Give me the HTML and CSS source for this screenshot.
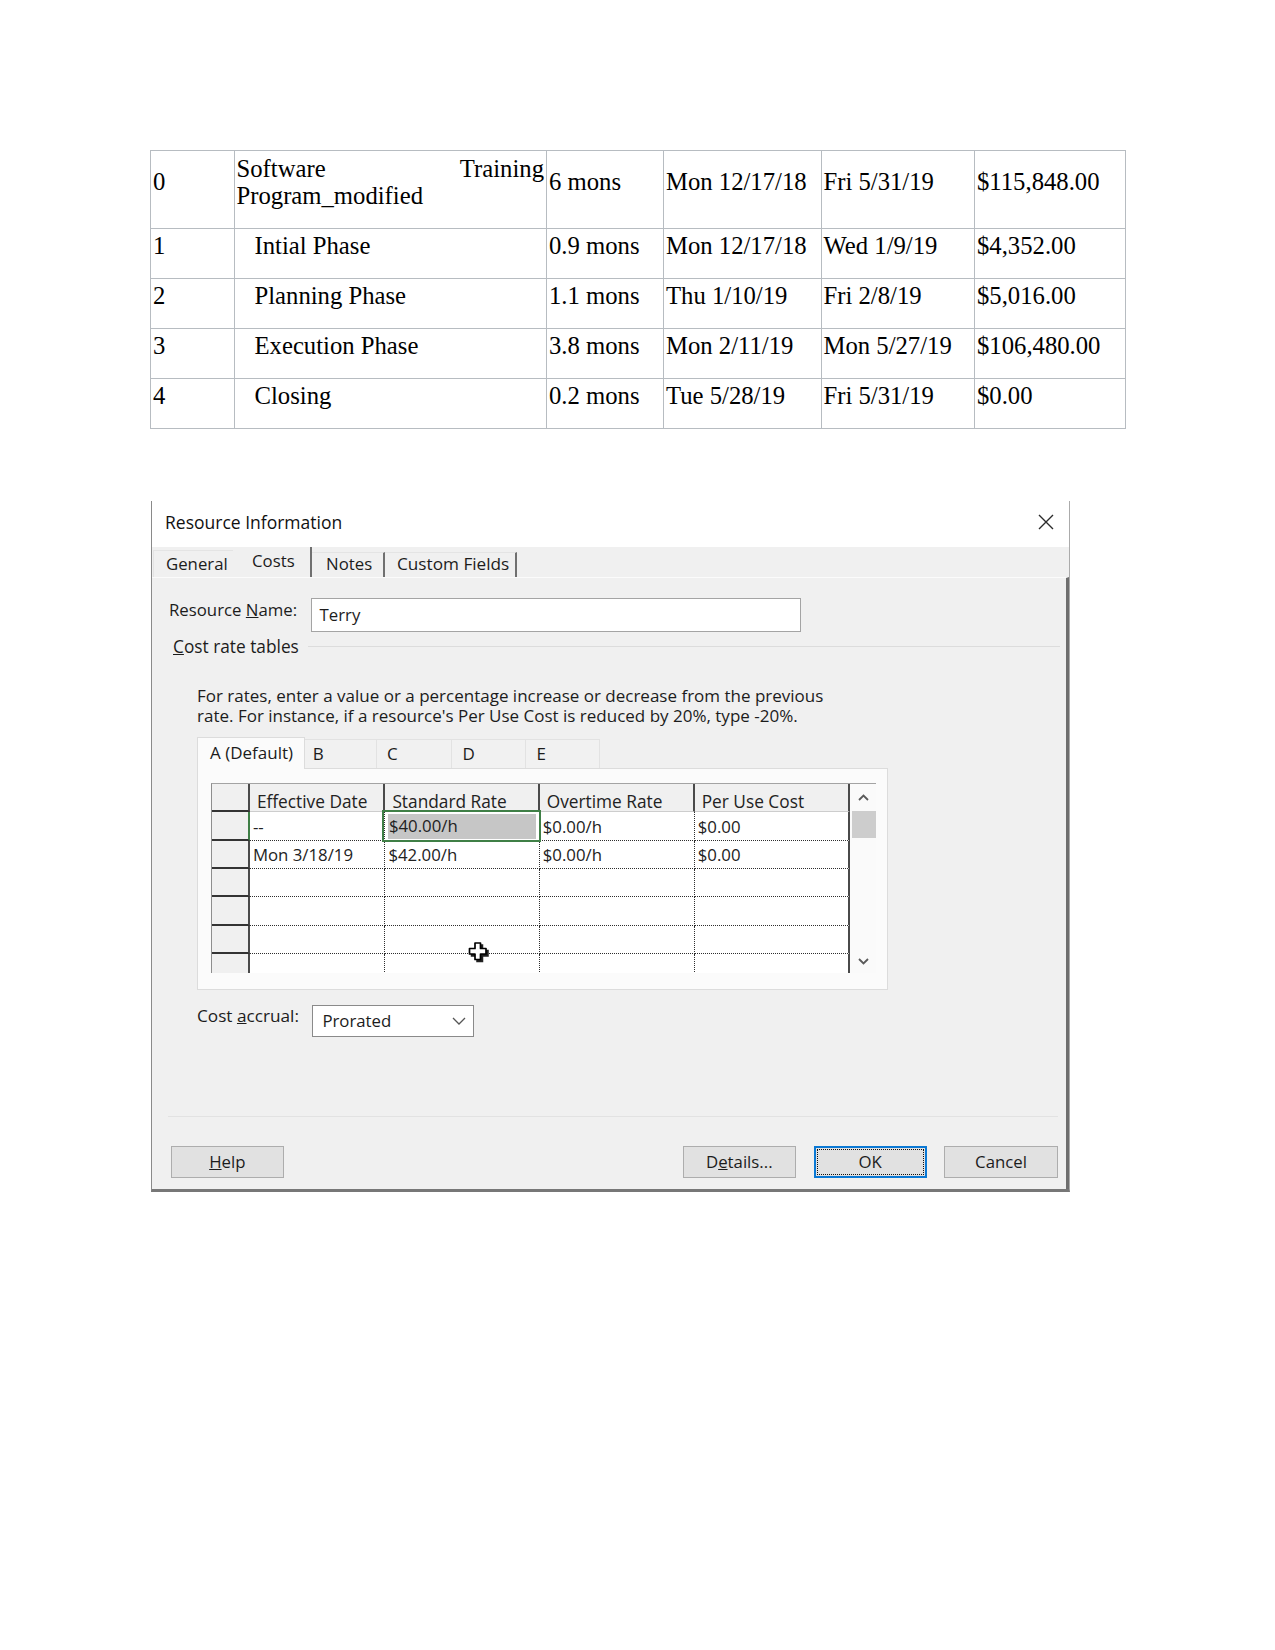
FILE: index.html
```html
<!DOCTYPE html>
<html lang="en">
<head>
<meta charset="utf-8">
<title>Resource Information</title>
<link rel="stylesheet" href="styles.css">
</head>
<body>
<div class="page">
  <table class="tasks">
    <colgroup>
      <col class="c-id"><col class="c-name"><col class="c-dur"><col class="c-start"><col class="c-finish"><col class="c-cost">
    </colgroup>
    <tr>
      <td>0</td>
      <td class="just">Software Training Program_modified</td>
      <td>6 mons</td>
      <td>Mon 12/17/18</td>
      <td>Fri 5/31/19</td>
      <td>$115,848.00</td>
    </tr>
    <tr>
      <td>1</td>
      <td class="indent">Intial Phase</td>
      <td>0.9 mons</td>
      <td>Mon 12/17/18</td>
      <td>Wed 1/9/19</td>
      <td>$4,352.00</td>
    </tr>
    <tr>
      <td>2</td>
      <td class="indent">Planning Phase</td>
      <td>1.1 mons</td>
      <td>Thu 1/10/19</td>
      <td>Fri 2/8/19</td>
      <td>$5,016.00</td>
    </tr>
    <tr>
      <td>3</td>
      <td class="indent">Execution Phase</td>
      <td>3.8 mons</td>
      <td>Mon 2/11/19</td>
      <td>Mon 5/27/19</td>
      <td>$106,480.00</td>
    </tr>
    <tr>
      <td>4</td>
      <td class="indent">Closing</td>
      <td>0.2 mons</td>
      <td>Tue 5/28/19</td>
      <td>Fri 5/31/19</td>
      <td>$0.00</td>
    </tr>
  </table>

  <div class="dialog">
    <div class="titlebar">
      <span class="title">Resource Information</span>
      <svg class="close" width="16" height="16" viewBox="0 0 16 16"><path d="M1 1 L15 15 M15 1 L1 15" stroke="#2b2b2b" stroke-width="1.4" fill="none"/></svg>
    </div>
    <div class="tabstrip">
      <div class="tab tab-general">General</div>
      <div class="tab tab-costs">Costs</div>
      <div class="tab tab-notes">Notes</div>
      <div class="tab tab-custom">Custom Fields</div>
    </div>
    <div class="panel">
      <div class="name-row">
        <span class="name-label">Resource <u>N</u>ame:</span>
        <div class="field">Terry</div>
      </div>
      <div class="legend">
        <span><u>C</u>ost rate tables</span>
        <span class="legend-line"></span>
      </div>
      <p class="desc">For rates, enter a value or a percentage increase or decrease from the previous<br>rate. For instance, if a resource's Per Use Cost is reduced by 20%, type -20%.</p>
      <div class="rtabs">
        <div class="rtab rtab-a">A (Default)</div>
        <div class="rtab rtab-b">B</div>
        <div class="rtab rtab-c">C</div>
        <div class="rtab rtab-d">D</div>
        <div class="rtab rtab-e">E</div>
      </div>
      <div class="rpanel">
        <div class="grid">
          <div class="gtable">
            <div class="grow ghead">
              <div class="cell rh"></div>
              <div class="cell c1">Effective Date</div>
              <div class="cell c2">Standard Rate</div>
              <div class="cell c3">Overtime Rate</div>
              <div class="cell c4">Per Use Cost</div>
            </div>
            <div class="grow">
              <div class="cell rh active"></div>
              <div class="cell c1">--</div>
              <div class="cell c2 sel"><span class="hl">$40.00/h</span></div>
              <div class="cell c3">$0.00/h</div>
              <div class="cell c4">$0.00</div>
            </div>
            <div class="grow">
              <div class="cell rh"></div>
              <div class="cell c1">Mon 3/18/19</div>
              <div class="cell c2">$42.00/h</div>
              <div class="cell c3">$0.00/h</div>
              <div class="cell c4">$0.00</div>
            </div>
            <div class="grow">
              <div class="cell rh"></div><div class="cell c1"></div><div class="cell c2"></div><div class="cell c3"></div><div class="cell c4"></div>
            </div>
            <div class="grow">
              <div class="cell rh"></div><div class="cell c1"></div><div class="cell c2"></div><div class="cell c3"></div><div class="cell c4"></div>
            </div>
            <div class="grow">
              <div class="cell rh"></div><div class="cell c1"></div><div class="cell c2"></div><div class="cell c3"></div><div class="cell c4"></div>
            </div>
            <div class="grow">
              <div class="cell rh"></div><div class="cell c1"></div><div class="cell c2"></div><div class="cell c3"></div><div class="cell c4"></div>
            </div>
          </div>
          <div class="sb">
            <div class="sb-btn"><svg width="11" height="7" viewBox="0 0 11 7"><polyline points="1,6 5.5,1.5 10,6" fill="none" stroke="#5a5a5a" stroke-width="1.8"/></svg></div>
            <div class="sb-thumb"></div>
            <div class="sb-track"></div>
            <div class="sb-btn sb-down"><svg width="11" height="7" viewBox="0 0 11 7"><polyline points="1,1 5.5,5.5 10,1" fill="none" stroke="#5a5a5a" stroke-width="1.8"/></svg></div>
          </div>
          <svg class="cursor" width="24" height="23" viewBox="0 0 24 23">
            <path d="M8 2 H13.5 V7.5 H19 V13 H13.5 V18.5 H8 V13 H2.5 V7.5 H8 Z" transform="translate(2,2)" fill="#222" stroke="#222" stroke-width="1.5"/>
            <path d="M8 2 H13.5 V7.5 H19 V13 H13.5 V18.5 H8 V13 H2.5 V7.5 H8 Z" fill="#fff" stroke="#000" stroke-width="1.7" stroke-linejoin="round"/>
          </svg>
        </div>
      </div>
      <div class="accrual">
        <span class="accrual-label">Cost <u>a</u>ccrual:</span>
        <div class="select">
          <span>Prorated</span>
          <svg width="14" height="8" viewBox="0 0 14 8"><polyline points="1,1 7,7 13,1" fill="none" stroke="#555" stroke-width="1.3"/></svg>
        </div>
      </div>
      <div class="sep"></div>
      <div class="btnrow">
        <div class="btn"><span><u>H</u>elp</span></div>
        <div class="btn-spacer"></div>
        <div class="btn"><span>D<u>e</u>tails...</span></div>
        <div class="btn btn-ok"><span>OK</span></div>
        <div class="btn"><span>Cancel</span></div>
      </div>
    </div>
  </div>
</div>
</body>
</html>
```
FILE: styles.css
```css
html, body {
  margin: 0;
  padding: 0;
  background: #ffffff;
}

.page {
  padding: 150px 0 0 150px;
}

/* ---------- task table ---------- */
.tasks {
  border-collapse: collapse;
  table-layout: fixed;
  width: 975px;
  font-family: "Liberation Serif", "Times New Roman", serif;
  font-size: 24.7px;
  line-height: 27.5px;
  color: #000;
}
.c-id { width: 83.5px; }
.c-name { width: 312.5px; }
.c-dur { width: 117px; }
.c-start { width: 157.5px; }
.c-finish { width: 153.5px; }
.c-cost { width: 150.5px; }

.tasks td {
  border: 1px solid #b7bcc1;
  padding: 3.5px 2px 18px 2px;
  vertical-align: middle;
  white-space: nowrap;
}
.tasks td.just {
  white-space: normal;
  text-align: justify;
}
.tasks td.indent {
  padding-left: 20px;
}

/* ---------- dialog ---------- */
.dialog {
  margin: 72px 0 0 1px;
  width: 919px;
  box-sizing: border-box;
  border-left: 1px solid #8a8a8a;
  border-right: 1px solid #ababab;
  border-bottom: 3px solid #777;
  font-family: "Open Sans", "Noto Sans", sans-serif;
  font-size: 16.8px;
  line-height: 22px;
  color: #1c1c1c;
}

.titlebar {
  height: 46px;
  background: #fff;
  display: flex;
  align-items: center;
}
.title {
  padding-left: 13px;
  margin-top: -3px;
  font-size: 17.5px;
  color: #111;
}
.close {
  margin-left: auto;
  margin-right: 15px;
  margin-top: -4px;
}

.tabstrip {
  height: 30px;
  background: #f0f0f0;
  display: flex;
  align-items: flex-end;
  padding-left: 1px;
}
.tab {
  box-sizing: border-box;
  white-space: nowrap;
}
.tab-general {
  width: 80px;
  height: 27px;
  padding: 2.5px 0 0 12px;
  border-left: 1px solid #e4e4e4;
  border-top: 1px solid #e4e4e4;
}
.tab-costs {
  width: 79px;
  height: 30px;
  padding: 3px 0 0 19px;
  border-right: 2px solid #707070;
}
.tab-notes {
  width: 73px;
  height: 25px;
  padding: 0 0 0 14px;
  border-top: 1px solid #e4e4e4;
  border-right: 2px solid #707070;
}
.tab-custom {
  width: 132px;
  height: 25px;
  padding: 0 0 0 12px;
  border-top: 1px solid #e4e4e4;
  border-right: 2px solid #707070;
  font-size: 17.2px;
}

.panel {
  background: #f0f0f0;
  border-top: 1px solid #fbfbfb;
  border-right: 3px solid #6e6e6e;
  padding-bottom: 10.5px;
}

.name-row {
  display: flex;
  align-items: flex-start;
  margin: 20px 0 0 17px;
}
.name-label {
  width: 141.5px;
  flex: none;
  padding-top: 1px;
}
.field {
  width: 490px;
  height: 34px;
  box-sizing: border-box;
  border: 1px solid #a4a4a4;
  background: #fff;
  padding-left: 8px;
  line-height: 32px;
}

.legend {
  display: flex;
  align-items: center;
  margin: 4px 6px 0 21px;
  font-size: 17.3px;
}
.legend-line {
  flex: 1;
  height: 1px;
  background: #dcdcdc;
  margin-left: 9px;
}

.desc {
  margin: 28.5px 0 0 45px;
  line-height: 20px;
  font-size: 17px;
}

.rtabs {
  display: flex;
  align-items: flex-end;
  height: 31px;
  margin: 10.5px 0 0 45px;
  font-size: 17px;
}
.rtab {
  box-sizing: border-box;
  height: 29px;
  width: 73.5px;
  padding: 3px 0 0 10px;
  background: #f1f1f1;
  border-top: 1px solid #e2e2e2;
  border-right: 1px solid #e2e2e2;
}
.rtab-b { width: 72.3px; padding-left: 8px; }
.rtab-c { width: 75.4px; }
.rtab-d { width: 74px; }
.rtab-e { width: 73.3px; }
.rtab-a {
  position: relative;
  z-index: 1;
  width: 107.7px;
  height: 32px;
  margin-bottom: -1px;
  padding: 4px 0 0 12px;
  background: #fbfbfb;
  border: 1px solid #dcdcdc;
  border-bottom: none;
}

.rpanel {
  margin-left: 45px;
  width: 691px;
  height: 222.3px;
  box-sizing: border-box;
  border: 1px solid #dcdcdc;
  background: #fbfbfb;
  padding: 14.6px 0 0 13.4px;
}

/* ---------- grid ---------- */
.grid {
  position: relative;
  width: 665px;
  height: 190px;
  box-sizing: border-box;
  overflow: hidden;
  display: flex;
  border-top: 1px solid #a3a3a3;
  border-left: 1px solid #8e8e8e;
  background: #fff;
}
.gtable {
  flex: none;
  width: 637.3px;
}
.grow {
  display: flex;
  height: 28.3px;
  font-size: 16.8px;
  color: #222;
}
.grow.ghead {
  height: 28.4px;
  font-size: 17.3px;
}
.cell {
  box-sizing: border-box;
  height: 100%;
  flex: none;
  white-space: nowrap;
  overflow: hidden;
  padding: 3.3px 0 0 3px;
  border-bottom: 1px dotted #2e2e2e;
}
.rh {
  width: 37.5px;
  background: #f0f0f0;
  border-right: 2px solid #4a4a4a;
  border-bottom: 2px solid #333;
}
.rh.active {
  border-right-color: #3f7f46;
}
.c1 { width: 135.5px; border-right: 1px dotted #2e2e2e; }
.c2 { width: 154.3px; border-right: 1px dotted #2e2e2e; }
.c3 { width: 155px; border-right: 1px dotted #2e2e2e; }
.c4 { width: 155px; border-right: 2px solid #4a4a4a; }

.ghead .cell {
  background: #f0f0f0;
  padding: 6.5px 0 0 7px;
  border-bottom: 1px solid #cdcdcd;
  border-right: 2px solid #4a4a4a;
}
.ghead .rh {
  border-bottom: 2px solid #333;
}

.sel {
  position: relative;
  padding: 2px 2.5px 1px 2.5px;
  overflow: visible;
}
.sel::before {
  content: "";
  position: absolute;
  left: -3px;
  top: -2px;
  right: -2px;
  bottom: -2px;
  border: 2px solid #3f7f46;
}
.hl {
  display: block;
  height: 100%;
  box-sizing: border-box;
  background: #c6c6c6;
  padding: 1px 0 0 1px;
}

.sb {
  flex: none;
  width: 26.7px;
  display: flex;
  flex-direction: column;
  background: #fafafa;
}
.sb-btn {
  height: 27.4px;
  display: flex;
  align-items: center;
  justify-content: center;
}
.sb-thumb {
  height: 26.6px;
  margin-left: 2.7px;
  background: #cdcdcd;
}
.sb-track {
  flex: 1;
}
.sb-down {
  height: 23.6px;
}

.cursor {
  position: absolute;
  left: 255px;
  top: 157px;
}

/* ---------- accrual ---------- */
.accrual {
  display: flex;
  align-items: flex-start;
  margin: 15.7px 0 0 45px;
}
.accrual-label {
  width: 115.4px;
  flex: none;
  font-size: 17.2px;
}
.select {
  width: 161.6px;
  height: 32px;
  box-sizing: border-box;
  border: 1px solid #8a8a8a;
  background: #fff;
  display: flex;
  align-items: center;
  justify-content: space-between;
  padding: 0 7px 0 9px;
}

.sep {
  height: 1px;
  background: #e2e2e2;
  margin: 79px 8px 0 16px;
}

.btnrow {
  display: flex;
  margin: 29px 8.3px 0 18.7px;
}
.btn {
  width: 113.3px;
  height: 32px;
  box-sizing: border-box;
  border: 1px solid #adadad;
  background: #e1e1e1;
  display: flex;
  align-items: center;
  justify-content: center;
  flex: none;
}
.btn + .btn {
  margin-left: 17.6px;
}
.btn-spacer {
  flex: 1;
}
.btn-ok {
  position: relative;
  border: 2px solid #0a78d4;
}
.btn-ok::after {
  content: "";
  position: absolute;
  left: 1px;
  top: 1px;
  right: 1px;
  bottom: 1px;
  border: 1px dotted #111;
}
```
